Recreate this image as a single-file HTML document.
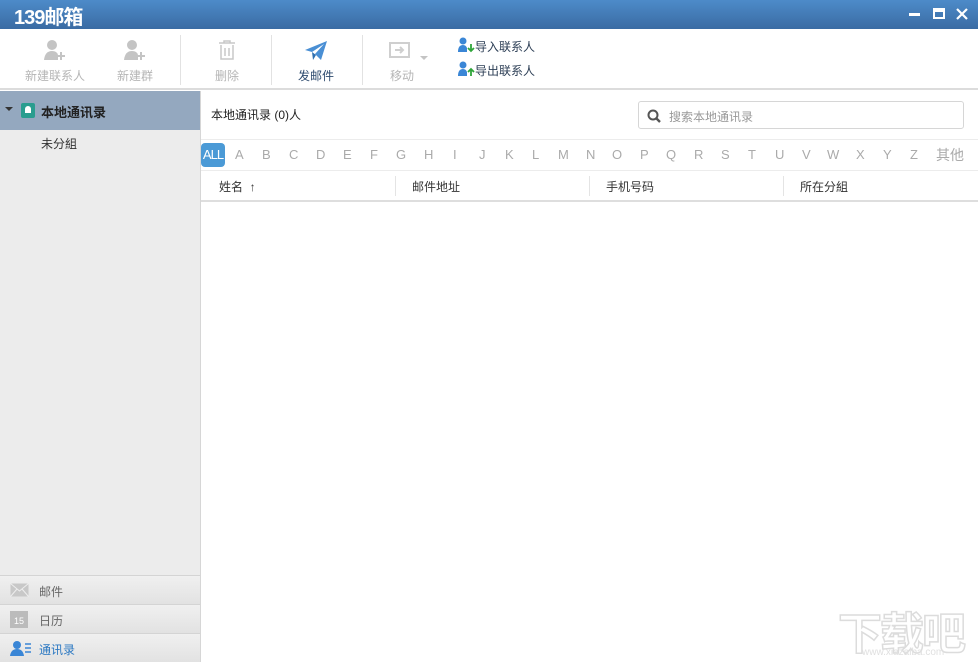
<!DOCTYPE html>
<html><head><meta charset="utf-8"><style>
*{margin:0;padding:0;box-sizing:border-box}
body{width:978px;height:662px;overflow:hidden;font-family:"Liberation Sans","Noto Sans CJK SC",sans-serif;font-size:12px;color:#333;background:#fff;position:relative}
.abs{position:absolute}
#title{left:0;top:0;width:978px;height:29px;background:linear-gradient(#4d8bc9,#3a6ba3)}
#tb{left:0;top:29px;width:978px;height:61px;background:#fff;border-bottom:2px solid #dcdcdc}
.btn{position:absolute;top:0;height:61px;text-align:center;color:#b5b5b5;font-size:12px}
.btn .lbl{position:absolute;top:38px;left:0;right:0}
.sep{position:absolute;top:6px;width:1px;height:50px;background:#e2e2e2}
#side{left:0;top:91px;width:201px;height:571px;background:#ececec;border-right:1px solid #d6d6d6}
.nav{position:absolute;left:0;width:200px;height:29px;background:linear-gradient(#f0f0f0,#e2e2e2);border-top:1px solid #d4d4d4;color:#666;font-size:12px}
.nav span{position:absolute;left:39px;top:7px}
.let{position:absolute;top:147px;color:#aaa;font-size:13px}
.col{position:absolute;top:178px;font-size:12px;color:#333}
.vs{position:absolute;top:176px;width:1px;height:20px;background:#e4e4e4}
.lk{position:absolute;left:457px;color:#2c3e55;font-size:12px;padding-left:18px}
.lk svg{position:absolute;left:0;top:-1px}
</style></head><body>
<div id="title" class="abs">
 <div class="abs" style="left:14px;top:1px;color:#fff;font-weight:bold;font-size:20px;letter-spacing:-1px">139邮箱</div>
 <div class="abs" style="left:909px;top:13px;width:11px;height:3px;background:#fff"></div>
 <div class="abs" style="left:933px;top:8px;width:12px;height:11px;border:2px solid #fff;border-top-width:4px"></div>
 <svg class="abs" style="left:955px;top:7px" width="14" height="14"><path d="M2 2L12 12M12 2L2 12" stroke="#fff" stroke-width="2.2"/></svg>
</div>
<div id="tb" class="abs">
 <div class="btn" style="left:20px;width:70px"><svg class="abs" style="left:23px;top:10px" width="24" height="22"><circle cx="9" cy="6" r="5" fill="#c4c4c4"/><path d="M1 21Q2 12 9 12Q14 12 15 16V21Z" fill="#c4c4c4"/><path d="M14 17H22M18 13V21" stroke="#c4c4c4" stroke-width="2"/></svg><div class="lbl">新建联系人</div></div>
 <div class="btn" style="left:105px;width:60px"><svg class="abs" style="left:18px;top:10px" width="24" height="22"><circle cx="9" cy="6" r="5" fill="#c4c4c4"/><path d="M1 21Q2 12 9 12Q14 12 15 16V21Z" fill="#c4c4c4"/><path d="M14 17H22M18 13V21" stroke="#c4c4c4" stroke-width="2"/></svg><div class="lbl">新建群</div></div>
 <div class="sep" style="left:180px"></div>
 <div class="btn" style="left:200px;width:54px"><svg class="abs" style="left:18px;top:11px" width="18" height="20"><path d="M1 3H17M6 3V1H12V3M3 5V19H15V5M7 8V16M11 8V16" stroke="#c8c8c8" stroke-width="1.5" fill="none"/></svg><div class="lbl">删除</div></div>
 <div class="sep" style="left:271px"></div>
 <div class="btn" style="left:288px;width:56px;color:#2d4a6e"><svg class="abs" style="left:16px;top:11px" width="24" height="22"><path d="M1 10L23 1L17 20L11 14L20 4L8 12Z" fill="#4a8fd4"/><path d="M8 12L9 20L12 15Z" fill="#2f6fb0"/></svg><div class="lbl">发邮件</div></div>
 <div class="sep" style="left:362px"></div>
 <div class="btn" style="left:380px;width:50px"><svg class="abs" style="left:9px;top:12px" width="22" height="17"><rect x="1" y="2" width="19" height="14" fill="none" stroke="#cfcfcf" stroke-width="2"/><path d="M6 9H14M11 6L14 9L11 12" stroke="#cfcfcf" stroke-width="2" fill="none"/></svg><div class="lbl" style="right:auto;width:70px;text-align:left;left:10px">移动</div><div class="abs" style="left:40px;top:27px;border:4px solid transparent;border-top-color:#c4c4c4"></div></div>
 <div class="lk" style="top:9px"><svg width="18" height="16"><circle cx="6" cy="4" r="3.5" fill="#3a86d6"/><path d="M1 15Q1 8 6 8Q9 8 10 11V15Z" fill="#3a86d6"/><path d="M14 7V14M11 11L14 14L17 11" stroke="#2fa53a" stroke-width="1.8" fill="none"/></svg>导入联系人</div>
 <div class="lk" style="top:33px"><svg width="18" height="16"><circle cx="6" cy="4" r="3.5" fill="#3a86d6"/><path d="M1 15Q1 8 6 8Q9 8 10 11V15Z" fill="#3a86d6"/><path d="M14 15V8M11 11L14 8L17 11" stroke="#2fa53a" stroke-width="1.8" fill="none"/></svg>导出联系人</div>
</div>
<div id="side" class="abs">
 <div class="abs" style="left:0;top:0;width:200px;height:39px;background:#94a8bf"></div>
 <div class="abs" style="left:5px;top:16px;border:4px solid transparent;border-top-color:#333"></div>
 <div class="abs" style="left:21px;top:12px;width:14px;height:15px;background:#2a9d8f;border-radius:2px"><div style="margin:3px auto;width:6px;height:7px;background:#fff;border-radius:3px 3px 0 0"></div></div>
 <div class="abs" style="left:41px;top:11px;font-weight:bold;color:#222;font-size:13px">本地通讯录</div>
 <div class="abs" style="left:41px;top:44px;color:#333">未分組</div>
 <div class="nav" style="top:484px"><svg class="abs" style="left:10px;top:7px" width="19" height="14"><rect x="0.5" y="0.5" width="18" height="13" fill="#c8c8c8"/><path d="M0.5 0.5L9.5 8L18.5 0.5M0.5 13.5L7 6M18.5 13.5L12 6" stroke="#eee" fill="none"/></svg><span>邮件</span></div>
 <div class="nav" style="top:513px"><div class="abs" style="left:10px;top:6px;width:18px;height:17px;background:#bbb;color:#fff;font-size:9px;text-align:center;line-height:20px">15</div><span>日历</span></div>
 <div class="nav" style="top:542px"><svg class="abs" style="left:10px;top:6px" width="22" height="17"><circle cx="7" cy="5" r="4" fill="#3a86d6"/><path d="M0 16Q1 9 7 9Q13 9 14 16Z" fill="#3a86d6"/><path d="M15 4H21M15 8H21M15 12H21" stroke="#3a86d6" stroke-width="1.6"/></svg><span style="color:#2b78c2">通讯录</span></div>
</div>
<div class="abs" style="left:211px;top:106px;color:#222">本地通讯录 (0)人</div>
<div class="abs" style="left:638px;top:101px;width:326px;height:28px;border:1px solid #d6d6d6;border-radius:3px"><svg class="abs" style="left:8px;top:7px" width="14" height="14"><circle cx="6" cy="6" r="4.5" stroke="#555" stroke-width="2" fill="none"/><path d="M9 9L13 13" stroke="#555" stroke-width="2.4"/></svg><div class="abs" style="left:30px;top:6px;color:#999">搜索本地通讯录</div></div>
<div class="abs" style="left:201px;top:139px;width:777px;height:1px;background:#ececec"></div>
<div class="abs" style="left:201px;top:143px;width:24px;height:24px;background:#4b9ad6;border-radius:4px;color:#fff;font-size:13px;line-height:24px;text-align:center;letter-spacing:-1px">ALL</div>
<div class="let" style="left:235px">A</div><div class="let" style="left:262px">B</div><div class="let" style="left:289px">C</div><div class="let" style="left:316px">D</div><div class="let" style="left:343px">E</div><div class="let" style="left:370px">F</div><div class="let" style="left:396px">G</div><div class="let" style="left:424px">H</div><div class="let" style="left:453px">I</div><div class="let" style="left:479px">J</div><div class="let" style="left:505px">K</div><div class="let" style="left:532px">L</div><div class="let" style="left:558px">M</div><div class="let" style="left:586px">N</div><div class="let" style="left:612px">O</div><div class="let" style="left:640px">P</div><div class="let" style="left:666px">Q</div><div class="let" style="left:694px">R</div><div class="let" style="left:721px">S</div><div class="let" style="left:748px">T</div><div class="let" style="left:775px">U</div><div class="let" style="left:802px">V</div><div class="let" style="left:827px">W</div><div class="let" style="left:856px">X</div><div class="let" style="left:883px">Y</div><div class="let" style="left:910px">Z</div><div class="let" style="left:936px;top:145px;font-size:14px">其他</div>
<div class="abs" style="left:201px;top:170px;width:777px;height:1px;background:#ececec"></div>
<div class="col" style="left:219px">姓名 &nbsp;↑</div><div class="vs" style="left:395px"></div>
<div class="col" style="left:412px">邮件地址</div><div class="vs" style="left:589px"></div>
<div class="col" style="left:606px">手机号码</div><div class="vs" style="left:783px"></div>
<div class="col" style="left:800px">所在分組</div>
<div class="abs" style="left:201px;top:200px;width:777px;height:2px;background:#dedede"></div>
<div class="abs" style="left:838px;top:598px;color:#fff;-webkit-text-stroke:1.5px #dcdcdc;font-size:44px;font-weight:bold;letter-spacing:-2px">下载吧</div>
<div class="abs" style="left:862px;top:647px;color:#e0e0e0;font-size:10px">www.xiazaiba.com</div>
</body></html>
